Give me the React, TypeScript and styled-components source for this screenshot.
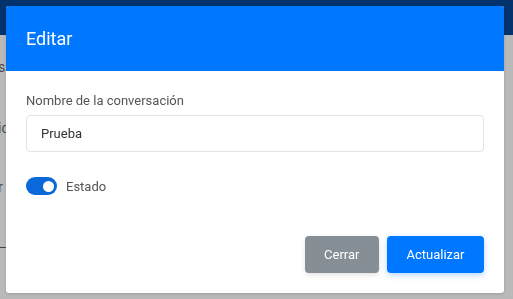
import React, { useState } from 'react';
import styled, { createGlobalStyle } from 'styled-components';

const GlobalStyle = createGlobalStyle`
  html, body {
    margin: 0;
    padding: 0;
    width: 513px;
    height: 299px;
    overflow: hidden;
    font-family: Roboto, "Noto Sans", Arial, sans-serif;
  }
`;

const Page = styled.div`
  width: 513px;
  height: 299px;
  display: flex;
  flex-direction: column;
  background: #b9b9b9;
`;

const TopBar = styled.div`
  height: 35px;
  background: #03336c;
`;

const PageList = styled.div`
  display: flex;
  flex-direction: column;
  color: #4a4a4a;
  font-size: 14px;
`;

const PageRow = styled.div<{ $h: number }>`
  height: ${(p) => p.$h}px;
  display: flex;
  align-items: center;
  margin-left: -2px;
`;

const PageRule = styled.div`
  height: 1px;
  width: 40px;
  background: #444;
`;

const Backdrop = styled.div`
  position: fixed;
  inset: 0;
  padding: 6px;
  display: flex;
  align-items: flex-start;
`;

const Modal = styled.div`
  width: 498px;
  height: 287px;
  background: #fff;
  border-radius: 3px;
  overflow: hidden;
  display: flex;
  flex-direction: column;
  box-shadow: 0 1px 3px rgba(0, 0, 0, 0.15);
`;

const Header = styled.div`
  height: 65px;
  background: #0077ff;
  display: flex;
  align-items: center;
  padding: 0 20px;
`;

const Title = styled.h5`
  margin: 0;
  color: #fff;
  font-size: 18px;
  font-weight: 400;
`;

const Body = styled.div`
  flex: 1;
  padding: 20px 20px 0;
  display: flex;
  flex-direction: column;
`;

const Label = styled.label`
  font-size: 13px;
  line-height: 19px;
  color: #555;
  margin-bottom: 5px;
`;

const Input = styled.input`
  height: 37px;
  box-sizing: border-box;
  border: 1px solid #e2e2e2;
  border-radius: 4px;
  padding: 0 14px;
  font-family: inherit;
  font-size: 13px;
  color: #333;
  outline: none;
`;

const SwitchRow = styled.div`
  margin-top: 25px;
  display: flex;
  align-items: center;
  gap: 9px;
  font-size: 13px;
  color: #555;
`;

const Track = styled.button<{ $on: boolean }>`
  width: 31px;
  height: 18px;
  border-radius: 9px;
  border: none;
  padding: 0 3px;
  background: ${(p) => (p.$on ? '#0a68db' : '#ccc')};
  display: flex;
  align-items: center;
  justify-content: ${(p) => (p.$on ? 'flex-end' : 'flex-start')};
  cursor: pointer;
`;

const Knob = styled.span`
  width: 11px;
  height: 11px;
  border-radius: 50%;
  background: #fff;
`;

const Footer = styled.div`
  display: flex;
  justify-content: flex-end;
  gap: 8px;
  padding: 0 20px 20px;
`;

const Button = styled.button<{ $primary?: boolean }>`
  height: 37px;
  padding: 0 19.5px;
  border: none;
  border-radius: 4px;
  font-family: inherit;
  font-size: 13px;
  color: #fff;
  background: ${(p) => (p.$primary ? '#0077ff' : '#868e96')};
  box-shadow: ${(p) =>
    p.$primary ? '0 2px 6px rgba(0, 119, 255, 0.3)' : '0 2px 5px rgba(0, 0, 0, 0.12)'};
  cursor: pointer;
`;

export default function App() {
  const [name, setName] = useState('Prueba');
  const [on, setOn] = useState(true);

  return (
    <>
      <GlobalStyle />
      <Page>
        <TopBar />
        <PageList>
          <PageRow $h={64}>s</PageRow>
          <PageRow $h={58}>ic</PageRow>
          <PageRow $h={60}>r</PageRow>
          <PageRow $h={30} />
          <PageRule />
        </PageList>
      </Page>
      <Backdrop>
        <Modal>
          <Header>
            <Title>Editar</Title>
          </Header>
          <Body>
            <Label>Nombre de la conversación</Label>
            <Input value={name} onChange={(e) => setName(e.target.value)} />
            <SwitchRow>
              <Track $on={on} onClick={() => setOn(!on)}>
                <Knob />
              </Track>
              Estado
            </SwitchRow>
          </Body>
          <Footer>
            <Button>Cerrar</Button>
            <Button $primary>Actualizar</Button>
          </Footer>
        </Modal>
      </Backdrop>
    </>
  );
}
